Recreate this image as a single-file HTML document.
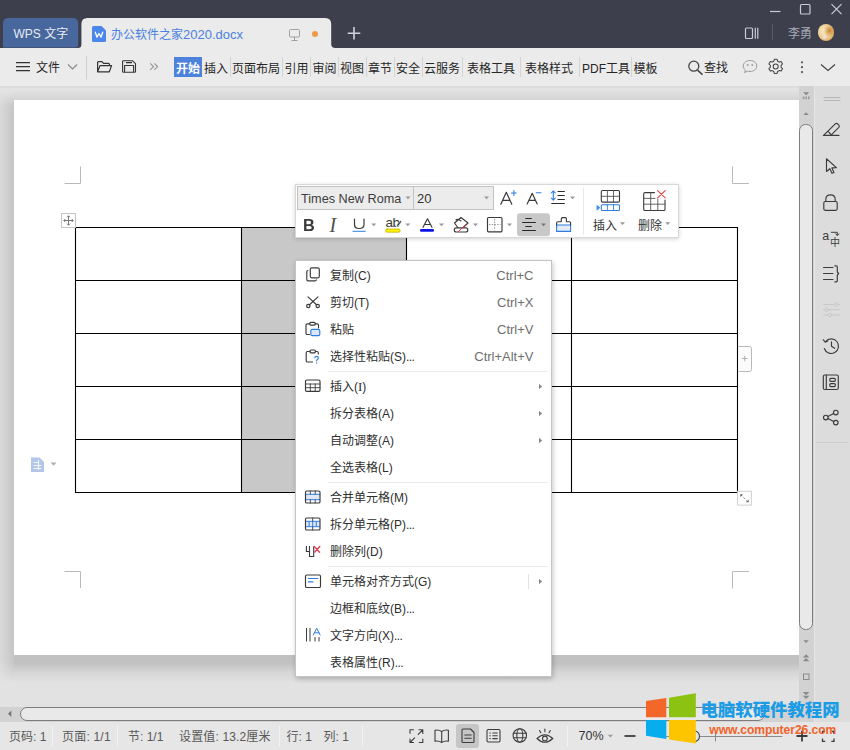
<!DOCTYPE html>
<html lang="zh-CN">
<head>
<meta charset="utf-8">
<title>WPS</title>
<style>
*{box-sizing:border-box;margin:0;padding:0}
html,body{width:850px;height:750px;overflow:hidden;background:#e1e1e1}
body{position:relative;font-family:"Liberation Sans","Noto Sans CJK SC",sans-serif;font-size:12px;color:#222}
.abs{position:absolute}
svg{position:absolute;overflow:visible}
.t{position:absolute;white-space:nowrap;line-height:1}
/* title bar */
#titlebar{left:0;top:0;width:850px;height:48px;background:#3d3f4c}
#tab1{left:3px;top:18px;width:76px;height:30px;background:#48679c;border-radius:7px 7px 0 0}
#tab2{left:81px;top:18px;width:250px;height:30px;background:#ebebeb;border-radius:7px 7px 0 0}
/* menubar */
#menubar{left:0;top:48px;width:850px;height:38px;background:#ebebeb}
.mt{position:absolute;top:62.500px;font-size:12px;line-height:13px;white-space:nowrap;color:#262626}
.ms{position:absolute;top:57px;width:1px;height:20px;background:#d4d4d4}
.st{top:730.600px;font-size:12px;color:#585858}
.cm{font-size:12px;line-height:14px;color:#2e2e2e}
.cs{font-size:13px;line-height:14px;color:#6e6e6e}
/* doc */
#docbg{left:0;top:86px;width:818px;height:620px;background:#e2e2e2}
#page{left:14px;top:100px;width:786px;height:555px;background:#fff}
</style>
</head>
<body>
<!-- TITLE BAR -->
<div class="abs" id="titlebar"></div>
<svg style="left:0;top:0" width="850" height="48" viewBox="0 0 850 48">
  <path d="M3 48V23.500Q3 18 8.500 18H72.700Q78.200 18 78.200 23.500V44.500Q78.200 47.600 75 47.600H3Z" fill="#48679c"/>
  <path d="M78 48Q81.400 48 81.400 44.500V24Q81.400 18 87.400 18H325.200Q331.200 18 331.200 24V44Q331.200 48 335.500 48Z" fill="#ebebeb"/>
</svg>
<div class="t" style="left:13.500px;top:28px;font-size:12px;color:#e6ebf5">WPS 文字</div>
<div class="t" style="left:111px;top:28px;font-size:12px;line-height:13px;color:#4a80e0">办公软件之家<span style="font-size:13px">2020.docx</span></div>


<!-- window controls -->
<svg style="left:0;top:0" width="850" height="48" viewBox="0 0 850 48" fill="none" stroke="#c9ccd6" stroke-width="1.2">
  <path d="M770 11.5h10.5"/>
  <rect x="800.5" y="4.5" width="9.5" height="9.5" rx="1"/>
  <path d="M831.5 4.2l10 10M841.5 4.2l-10 10"/>
  <rect x="745.5" y="28" width="7" height="10.5" rx="1"/>
  <path d="M755.3 27.8v11M757.8 27.8v11"/>
  <path d="M772.5 24v16" stroke="#5a5d6b" stroke-width="1"/>
  <!-- monitor icon in tab -->
  <g stroke="#a0a0a0" stroke-width="1">
    <rect x="289.500" y="29.500" width="10" height="7.5" rx="1"/>
    <path d="M294.500 37v3M291.500 40.500h6"/>
  </g>
  <!-- plus -->
  <path d="M354 27v12.500M347.700 33.200h12.600" stroke="#d0d3dc" stroke-width="1.6"/>
</svg>
<div class="abs" style="left:311.700px;top:30.500px;width:6.600px;height:6.600px;border-radius:50%;background:#f09a48"></div>
<div class="t" style="left:788px;top:28px;font-size:12px;color:#a8acb8">李勇</div>
<div class="abs" style="left:817.700px;top:24.200px;width:16.400px;height:16.400px;border-radius:50%;background:radial-gradient(circle at 40% 78%,#e8e4e8 0,rgba(232,228,232,0) 18%),radial-gradient(circle at 72% 40%,#c8862e 0,rgba(200,134,46,0) 40%),radial-gradient(circle at 42% 42%,#faeccc 0,#f0d29c 45%,#dca860 75%,#a8703a 100%)"></div>
<!-- doc icon -->
<svg style="left:92px;top:26px" width="14" height="16" viewBox="0 0 14 16">
  <path d="M1.500 0H9.500L14 4.500V14.500Q14 16 12.500 16H1.500Q0 16 0 14.500V1.500Q0 0 1.500 0Z" fill="#4b86ea"/>
  <path d="M3.300 6.200L5 11.200L7 7.500L9 11.200L10.700 6.200" fill="none" stroke="#fff" stroke-width="1.300" stroke-linejoin="round" stroke-linecap="round"/>
</svg>

<!-- MENU BAR -->
<div class="abs" id="menubar"></div>
<!-- hamburger + 文件 -->
<svg style="left:0;top:48px" width="850" height="38" viewBox="0 48 850 38" fill="none" stroke="#333" stroke-width="1.2">
  <path d="M16 62.700h14M16 66.700h14M16 70.700h14"/>
  <path d="M68 64.500l4.500 4.500l4.500-4.500" stroke="#888" stroke-width="1.100"/>
  <path d="M86.500 56v23.500" stroke="#cfcfcf" stroke-width="1"/>
  <!-- folder -->
  <path d="M97.600 71.800V62.500Q97.600 61.600 98.500 61.600H102L103.500 63.400H108.500Q109.400 63.400 109.400 64.300V65.600M97.600 71.800L100 65.600H111.600L109.300 71.800Z" stroke-linejoin="round"/>
  <!-- save -->
  <path d="M122.600 61.700Q122.600 60.800 123.500 60.800H132.600L135.500 63.700V71.400Q135.500 72.300 134.600 72.300H123.500Q122.600 72.300 122.600 71.400Z M124.600 72.300V65.500H133.600V72.300 M126 62.600H132" stroke-linejoin="round" stroke-width="1.100"/>
  <!-- >> -->
  <path d="M150.200 63.300l3.300 3.300l-3.300 3.300M154.300 63.300l3.300 3.300l-3.300 3.300" stroke="#989898" stroke-width="1.200"/>
  <!-- search -->
  <circle cx="693.800" cy="66.200" r="5" stroke="#444" stroke-width="1.300"/><path d="M697.500 70.100l5 4.500" stroke="#444" stroke-width="1.500"/>
  <!-- chat -->
  <g stroke="#9c9c9c" stroke-width="1">
   <path d="M750 60.500c3.800 0 6.800 2.500 6.800 5.500s-3 5.500-6.800 5.500c-.9 0-1.800-.1-2.600-.4l-2.700 1.500l.6-2.600c-1.300-1-2.100-2.400-2.100-4c0-3 3-5.500 6.800-5.500z"/>
   <circle cx="747.700" cy="65" r=".6" fill="#aaa"/><circle cx="752.300" cy="65" r=".6" fill="#aaa"/>
  </g>
  <!-- gear -->
  <g stroke="#444" stroke-width="1.050">
   <circle cx="775.700" cy="66.400" r="2.500"/>
   <path d="M774.300 59.300h2.800l.5 1.900l1.600.9l1.900-.5l1.400 2.400l-1.400 1.400v1.900l1.400 1.400l-1.400 2.400l-1.900-.5l-1.600.9l-.5 1.900h-2.800l-.5-1.900l-1.600-.9l-1.900.5l-1.400-2.400l1.400-1.400v-1.900l-1.400-1.400l1.400-2.400l1.900.5l1.600-.9z" stroke-linejoin="round"/>
  </g>
  <!-- dots -->
  <g fill="#555" stroke="none"><circle cx="802" cy="62.300" r="1.100"/><circle cx="802" cy="67.200" r="1.100"/><circle cx="802" cy="72.100" r="1.100"/></g>
  <path d="M821 64.500l7 6l7-6" stroke="#444" stroke-width="1.200"/>
</svg>
<div class="mt" style="left:36px;top:61.500px">文件</div>
<div class="abs" style="left:174px;top:57px;width:28px;height:20px;background:#4d82dc"></div>
<div class="mt" style="left:176px;color:#fff;font-weight:bold">开始</div>
<div class="mt" style="left:204px">插入</div>
<div class="mt" style="left:232px">页面布局</div>
<div class="mt" style="left:284.4px">引用</div>
<div class="mt" style="left:312.4px">审阅</div>
<div class="mt" style="left:340px">视图</div>
<div class="mt" style="left:368px">章节</div>
<div class="mt" style="left:396px">安全</div>
<div class="mt" style="left:424px">云服务</div>
<div class="mt" style="left:467px">表格工具</div>
<div class="mt" style="left:525px">表格样式</div>
<div class="mt" style="left:582px">PDF工具</div>
<div class="mt" style="left:633.5px">模板</div>
<div class="ms" style="left:230.4px"></div>
<div class="ms" style="left:282.4px"></div>
<div class="ms" style="left:310.4px"></div>
<div class="ms" style="left:338px"></div>
<div class="ms" style="left:366px"></div>
<div class="ms" style="left:394px"></div>
<div class="ms" style="left:422px"></div>
<div class="ms" style="left:462px"></div>
<div class="ms" style="left:520px"></div>
<div class="ms" style="left:578.5px"></div>
<div class="ms" style="left:631px"></div>
<div class="mt" style="left:704px;top:62px">查找</div>


<!-- DOC AREA -->
<div class="abs" id="docbg"></div>
<div class="abs" style="left:0;top:86px;width:800px;height:1.500px;background:#dcdcdc"></div>
<div class="abs" style="left:14px;top:87.500px;width:786px;height:12.500px;background:linear-gradient(#e4e4e4,#d5d5d5)"></div>
<div class="abs" style="left:0;top:92px;width:14px;height:590px;background:linear-gradient(90deg,#dadada,#c5c5c5);-webkit-mask-image:linear-gradient(transparent 0,#000 14px,#000 570px,transparent 590px);mask-image:linear-gradient(transparent 0,#000 14px,#000 570px,transparent 590px)"></div>
<div class="abs" style="left:14px;top:655px;width:786px;height:28px;background:linear-gradient(#c0c0c0 0,#c2c2c2 30%,#d6d6d6 62%,#e2e2e2 100%)"></div>

<div class="abs" id="page"></div>
<!-- table -->
<div class="abs" style="left:241px;top:227px;width:165px;height:265px;background:#c8c8c8"></div>
<svg style="left:0;top:86px" width="818" height="620" viewBox="0 86 818 620" fill="none" stroke="#000" stroke-width="1.100" shape-rendering="auto">
  <path d="M75.500 227.500H737.500M75.500 280.500H737.500M75.500 333.500H737.500M75.500 386.500H737.500M75.500 439.500H737.500M75.500 492.500H737.500"/>
  <path d="M75.500 227V493M241.500 227V493M406.500 227V493M571.500 227V493M737.500 227V493"/>
  <!-- crop marks -->
  <g stroke="#bababa" stroke-width="1">
    <path d="M80.500 166.500V183.500H64.500"/>
    <path d="M732.500 166.500V183.500H749"/>
    <path d="M64.500 571.500H80.500V588"/>
    <path d="M749 571.500H732.500V588.500"/>
  </g>
  <!-- move handle -->
  <rect x="61.500" y="213.500" width="14" height="14" fill="#fff" stroke="#c4c4c4" stroke-width="1"/>
  <g stroke="#777" stroke-width="1">
    <path d="M63.800 220.500H73.200M68.500 215.800V225.200"/>
    <path d="M65.300 219l-1.500 1.500l1.500 1.500M71.700 219l1.500 1.500l-1.500 1.500M67 217.300l1.500-1.500l1.500 1.500M67 223.700l1.500 1.500l1.500-1.500" />
  </g>
  <!-- plus handle -->
  <path d="M738.500 346.500H749.500Q751.500 346.500 751.500 348.500V369.500Q751.500 371.500 749.500 371.500H738.500" fill="#fbfbfb" stroke="#b9b9b9" stroke-width="1"/>
  <path d="M742 358.500H747.500M744.700 355.800V361.300" stroke="#b0b0b0" stroke-width="1"/>
  <!-- resize handle -->
  <rect x="737.600" y="491.300" width="13.800" height="13.800" fill="#fff" stroke="#d0d0d0" stroke-width="1"/>
  <path d="M740.700 494.500l7.500 7.500" stroke="#888" stroke-width=".9" stroke-dasharray="2.500 1.500"/><path d="M740.300 497V494.200H743.100Z M748.700 499.500V502.300H745.900Z" stroke="none" fill="#666"/>
  <!-- left doc icon -->
  <g stroke="none" fill="#b1c6e8">
    <path d="M31 457.500H39.500L44 462V472H31Z"/>
  </g>
  <path d="M33.500 462.500H38M33.500 465.500H41.500M33.500 468.500H41.500M38.500 460V470" stroke="#fff" stroke-width="1.200" opacity=".85"/>
  <path d="M50.500 462.500H56.500L53.500 465.800Z" fill="#b0b0b0" stroke="none"/>
</svg>



<!-- VERTICAL SCROLLBAR -->
<div class="abs" style="left:799px;top:86px;width:14.500px;height:620px;background:#d2d2d2"></div>
<div class="abs" style="left:799px;top:124px;width:13.500px;height:506px;border:1px solid #7d7d7d;border-radius:6.500px;background:#e9e9e9"></div>
<svg style="left:799px;top:86px" width="15" height="620" viewBox="799 86 15 620" fill="#8a8a8a" stroke="none">
  <path d="M803.200 92.300H809.200L806.200 95.300Z"/>
  <path d="M802.800 96.500h1.600v2.800h-1.600zM805.400 96.500h1.600v2.800h-1.600zM808 96.500h1.600v2.800h-1.600z" fill="#999"/>
  <path d="M803.400 115H808.800L806.100 112.200Z"/>
  <path d="M803.400 640.200H808.800L806.100 643Z"/>
  <path d="M802.800 657.500H809.400L806.100 654.300ZM802.800 661.300H809.400L806.100 658.100Z"/>
  <rect x="803.500" y="674" width="5.500" height="5.500" fill="none" stroke="#8a8a8a" stroke-width="1"/>
  <path d="M802.800 692H809.400L806.100 695.200ZM802.800 695.800H809.400L806.100 699Z"/>
</svg>

<!-- RIGHT SIDEBAR -->
<div class="abs" style="left:813.500px;top:86px;width:36.500px;height:635.500px;background:#dcdcdc;border-left:1px solid #e6e6e6"></div>
<svg style="left:813px;top:86px" width="37" height="400" viewBox="813 86 37 400" fill="none" stroke="#3c3c3c" stroke-width="1.150" stroke-linejoin="round" stroke-linecap="round">
  <path d="M824 97.500H840M824 100.500H840" stroke="#b6b6b6" stroke-width="1"/>
  <!-- highlighter -->
  <path d="M823.400 135.400H839M823.800 135.200L835.300 123.800Q836.500 122.800 837.600 123.800L838.900 125.200Q839.800 126.300 838.800 127.400L830.800 135.300M827.800 131.200L831.300 134.800"/>
  <!-- cursor -->
  <path d="M826.500 158.800V171.500L829.800 168.700L832 173.300L834 172.400L831.900 167.900L836.400 167.600Z"/>
  <!-- lock -->
  <path d="M825.800 201.500V199.500Q825.800 194.800 830.500 194.800Q835.200 194.800 835.200 199.500V201.500"/>
  <rect x="823.800" y="201.500" width="13.400" height="8.800" rx="1.500"/>
  <!-- translate -->
  <path d="M831.300 232.300H837.300V235.300M835.700 233.800L837.300 235.500L838.900 233.800" stroke-width="1"/>
  <text x="822.300" y="240.300" font-family="'Liberation Sans',sans-serif" font-size="12.500" fill="#3c3c3c" stroke="none">a</text>
  <text x="830" y="246" font-family="'Noto Sans CJK SC',sans-serif" font-size="10" fill="#3c3c3c" stroke="none">中</text>
  <!-- paragraph -->
  <path d="M823.500 267.500H833M823.500 273.500H833M823.500 279.500H833"/>
  <path d="M834.800 265.800H836.300Q837.300 265.800 837.300 266.800V272L838.600 273.500L837.300 275V280.800Q837.300 281.800 836.300 281.800H834.800"/>
  <!-- sliders (disabled) -->
  <g stroke="#c8c8c8" stroke-width="1">
    <path d="M823.600 304.500H839.600M823.600 309.700H839.600M823.600 315H839.600"/>
    <circle cx="836.500" cy="304.500" r="1.700" fill="#dcdcdc"/><circle cx="826.500" cy="309.700" r="1.700" fill="#dcdcdc"/><circle cx="830" cy="315" r="1.700" fill="#dcdcdc"/>
  </g>
  <!-- history -->
  <path d="M825.600 341.500A7.300 7.300 0 1 1 824.300 348.500"/>
  <path d="M823.300 339.800L825.300 342.200L828 340.800" />
  <path d="M831.500 341.800V346.300L834.700 348.300"/>
  <!-- doc library -->
  <rect x="823.300" y="375" width="15" height="14.500" rx="1.500"/>
  <path d="M826.300 375V389.500"/>
  <rect x="829.800" y="378.300" width="5.500" height="3" rx="1"/>
  <rect x="829.800" y="383.600" width="5.500" height="3" rx="1"/>
  <!-- share -->
  <circle cx="835.800" cy="412.500" r="2.300"/><circle cx="825.800" cy="417.500" r="2.300"/><circle cx="835.800" cy="422.600" r="2.300"/>
  <path d="M827.900 416.500L833.700 413.500M827.900 418.500L833.700 421.500"/>
  <path d="M816.500 442.500H847" stroke="#cdcdcd" stroke-width="1"/>
</svg>

<!-- HORIZONTAL SCROLLBAR -->
<div class="abs" style="left:0;top:706.500px;width:813.500px;height:15px;background:#d2d2d2"></div>
<div class="abs" style="left:20px;top:707px;width:745px;height:14px;border:1px solid #7d7d7d;border-radius:7px;background:#e9e9e9"></div>
<svg style="left:0;top:706px" width="20" height="16" viewBox="0 706 20 16"><path d="M11.300 710.500V717.100L8 713.800Z" fill="#777"/></svg>

<!-- STATUS BAR -->
<div class="abs" style="left:0;top:721.500px;width:850px;height:28.500px;background:#e6e6e6"></div>
<div class="t st" style="left:9px">页码: 1</div>
<div class="t st" style="left:62px;letter-spacing:.2px">页面: 1/1</div>
<div class="t st" style="left:128px">节: 1/1</div>
<div class="t st" style="left:179px;letter-spacing:.15px">设置值: 13.2厘米</div>
<div class="t st" style="left:286.5px">行: 1</div>
<div class="t st" style="left:323.5px">列: 1</div>
<div class="abs" style="left:52px;top:726px;width:1px;height:20px;background:#f2f2f2"></div>
<div class="abs" style="left:117px;top:726px;width:1px;height:20px;background:#f2f2f2"></div>
<div class="abs" style="left:278.5px;top:726px;width:1px;height:20px;background:#f2f2f2"></div>
<div class="abs" style="left:361.5px;top:726px;width:1px;height:20px;background:#f2f2f2"></div>
<div class="abs" style="left:566.5px;top:726px;width:1px;height:20px;background:#f2f2f2"></div>

<div class="abs" style="left:456px;top:724px;width:23px;height:24px;background:#c6c6c6;border-radius:3px"></div>
<svg style="left:400px;top:722px" width="414" height="28" viewBox="400 722 414 28" fill="none" stroke="#3c3c3c" stroke-width="1.100" stroke-linejoin="round" stroke-linecap="round">
  <!-- fullscreen -->
  <path d="M413.500 729.800H410V733.300M419 729.800H422.800V733.500M422.800 729.800L418.200 734.400M410 739V742.500H413.500M410 742.500L414.600 737.900M419.300 742.500H422.800V739"/>
  <!-- book -->
  <path d="M441.700 731.500Q438.500 729.500 435 730.300V741.300Q438.500 740.500 441.700 742.500Q444.900 740.500 448.400 741.300V730.300Q444.900 729.500 441.700 731.500ZM441.700 731.500V742.500"/>
  <!-- page -->
  <path d="M462 730Q462 729 463 729H470.500L474 732.500V741.500Q474 742.500 473 742.500H463Q462 742.500 462 741.500Z"/>
  <path d="M464.800 735H471.200M464.800 738.300H471.200"/>
  <!-- outline -->
  <rect x="487" y="729.500" width="13" height="12.500" rx="1.200"/>
  <path d="M492.800 733H497.300M492.800 735.800H497.300M492.800 738.600H497.300M489.800 733H490.300M489.800 735.800H490.300M489.800 738.600H490.300"/>
  <!-- globe -->
  <circle cx="519.800" cy="735.500" r="6.700"/>
  <ellipse cx="519.800" cy="735.500" rx="3" ry="6.700"/>
  <path d="M513.300 733.300H526.300M513.300 737.800H526.300"/>
  <!-- eye -->
  <path d="M537 738.500Q544.800 731 552.800 738.500Q544.800 746 537 738.500Z"/>
  <circle cx="544.900" cy="738.500" r="2.400"/>
  <path d="M544.900 729V731.800M539.500 730.500L540.800 732.800M550.300 730.500L549 732.800"/>
  <!-- zoom arrow -->
  <path d="M607.800 734.800H613L610.400 737.600Z" fill="#999" stroke="none"/>
  <!-- minus -->
  <path d="M624.500 736H635.500" stroke-width="1.800" stroke-linecap="butt"/>
  <!-- slider -->
  <path d="M660 736.500H782" stroke="#8a8a8a" stroke-width="1"/>
  <path d="M715.500 732V741" stroke="#8a8a8a" stroke-width="1"/>
  <circle cx="694" cy="736.300" r="5.500" fill="#e6e6e6"/>
  <!-- plus -->
  <path d="M796.500 736H807.500M802 730.800V741.500" stroke-width="1.800" stroke-linecap="butt"/>
</svg>
<svg style="left:813px;top:722px" width="37" height="28" viewBox="813 722 37 28" fill="none" stroke="#3c3c3c" stroke-width="1.100">
  <path d="M822.500 734V731.500H825M831.500 731.500H834V734M834 738.500V741.300H831.300M825.200 741.300H822.500V738.500" stroke-width="1.300"/>
</svg>
<div class="t" style="left:578.500px;top:729.800px;font-size:12.500px;color:#333">70%</div>

<!-- WATERMARK -->
<svg style="left:640px;top:690px" width="210" height="60" viewBox="640 690 210 60">
  <path d="M646 701L666.300 698V717.200H646Z" fill="#f4672a"/>
  <path d="M669 697.700L695.800 693.200V717.200H669Z" fill="#8cc211"/>
  <path d="M646 720H666.300V739L646 735.800Z" fill="#08adee"/>
  <path d="M669 720H695.800V743.600L669 739.400Z" fill="#fdc400"/>
  <text x="700.500" y="716" font-family="'Liberation Sans','Noto Sans CJK SC',sans-serif" font-weight="900" font-size="17.400" fill="#1d9ce6">电脑软硬件教程网</text>
  <text x="709.300" y="734" font-family="'Liberation Sans',sans-serif" font-weight="bold" font-size="12.100" fill="#f2622a" textLength="127" lengthAdjust="spacing">www.computer26.com</text>
</svg>


<!-- FLOATING TOOLBAR -->
<div class="abs" style="left:295px;top:184px;width:384px;height:54px;background:#fff;border:1px solid #d8d8d8;box-shadow:0 1px 4px rgba(0,0,0,.18)"></div>
<div class="abs" style="left:297px;top:186px;width:117px;height:24px;background:#ececec;border:1px solid #c2c2c2"></div>
<div class="abs" style="left:413px;top:186px;width:81px;height:24px;background:#ececec;border:1px solid #c2c2c2"></div>
<div class="t" style="left:301px;top:192.500px;font-size:12.700px;color:#3c3c3c">Times New Roma</div>
<div class="t" style="left:417px;top:191.500px;font-size:13px;color:#333">20</div>
<svg style="left:295px;top:184px" width="384" height="54" viewBox="295 184 384 54" fill="none" stroke="#3a3a3a" stroke-width="1.150" stroke-linejoin="round" stroke-linecap="round">
  <g fill="#999" stroke="none">
    <path d="M405.500 196.500H410.500L408 199.300Z"/>
    <path d="M484 196.500H489L486.500 199.300Z"/>
    <path d="M570 196.500H575L572.500 199.300Z"/>
    <path d="M371.300 223.500H376.300L373.800 226.300Z"/>
    <path d="M405.300 223.500H410.300L407.800 226.300Z"/>
    <path d="M439 223.500H444L441.500 226.300Z"/>
    <path d="M473 223.500H478L475.500 226.300Z"/>
    <path d="M507 223.500H512L509.500 226.300Z"/>
    <path d="M620 222.300H625L622.500 225.100Z"/>
    <path d="M665.200 222.300H670.200L667.700 225.100Z"/>
  </g>
  <!-- align highlighted -->
  <rect x="517" y="213.300" width="33" height="23" rx="3" fill="#c8c8c8" stroke="none"/>
  <path d="M541 223.500H546L543.500 226.300Z" fill="#777" stroke="none"/>
  <path d="M525.300 218.500H531.800M522.100 222.500H535.900M525.300 226.500H531.800M522.100 230.500H535.900" stroke-linecap="butt" stroke-width="1.100" stroke="#2a2a2a"/>
  <!-- U underline -->
  <path d="M354.500 219V224.500Q354.500 228.500 359.200 228.500Q364 228.500 364 224.500V219" stroke-width="1.200"/>
  <path d="M353 231.300H365.300" stroke="#2f7de0" stroke-width="1"/>
  <!-- ab highlight -->
  <rect x="385.600" y="229" width="14.600" height="3.200" rx="1.500" fill="#fff200" stroke="#b8a800" stroke-width=".7"/>
  <!-- font color A -->
  <path d="M423 227.300L427.500 218.800L432 227.300M424.600 224.500H430.400" stroke-width="1.150"/>
  <rect x="420" y="229" width="14" height="2.800" rx="1.200" fill="#0a14e6" stroke="none"/>
  <!-- shading (bucket) -->
  <path d="M454.500 223L461 217.500L468 223L462 228.500Q460 229.500 458.500 228.500Z M456 219.800Q458 218.600 461 221"/>
  <rect x="454.300" y="227.800" width="13.500" height="4.200" rx="2" fill="#fff"/>
  <path d="M458 231.800L466 224.500" stroke="#e0404a" stroke-width="1"/>
  <!-- borders -->
  <rect x="487.500" y="217.500" width="14.500" height="14.300" rx="1"/>
  <path d="M494.700 219V230.300M489 224.600H500.500" stroke="#777" stroke-width=".8" stroke-dasharray="1.500 1.200" stroke-linecap="butt"/>
  <!-- format painter -->
  <rect x="556.600" y="225" width="14" height="6.400" fill="#e4ecfa" stroke="#2f7de0" stroke-width="1.100"/>
  <path d="M556.600 225V223Q556.600 221.800 557.800 221.800H561.300V218.800Q561.300 217.600 562.500 217.600H565.200Q566.400 217.600 566.400 218.800V221.800H569.400Q570.600 221.800 570.600 223V225" stroke-width="1.100"/>
  <!-- A+ -->
  <path d="M500.800 204.300L506.300 192.300L511.800 204.300M502.800 200.300H509.800" stroke-width="1.200"/>
  <path d="M511.500 193H516.300M513.900 190.600V195.400" stroke="#2f7de0" stroke-width="1.100"/>
  <!-- A- -->
  <path d="M527.200 204L532.200 193.300L537.200 204M529 200.400H535.400" stroke-width="1.200"/>
  <path d="M536.300 192.700H541" stroke="#2f7de0" stroke-width="1.100"/>
  <!-- line spacing -->
  <path d="M553.300 191V200M551.300 193L553.300 190.800L555.300 193M551.300 198L553.300 200.200L555.300 198" stroke="#2f7de0" stroke-width="1.100"/>
  <path d="M557.500 191.500H564.800M557.500 195.500H564.800M557.500 199.500H564.800M551.300 203.500H564.800" stroke-linecap="butt" stroke-width="1.100" stroke="#2a2a2a"/>
  <!-- vsep -->
  <path d="M583.500 188V234.500" stroke="#e8e8e8" stroke-width="1"/>
  <!-- insert -->
  <rect x="601.300" y="190.500" width="18.200" height="11.600" rx="1.300" stroke-width="1.100"/>
  <path d="M601.300 196.300H619.500M607.400 190.500V202.100M613.500 190.500V202.100" stroke="#555" stroke-width=".9"/>
  <g stroke="#2f7de0" stroke-width="1.100">
    <rect x="601.300" y="204.800" width="18.200" height="5.700" rx="1"/>
    <path d="M607.400 204.800V210.500M613.500 204.800V210.500" stroke-width=".9"/>
    <path d="M597.200 205.500L599.800 207.700L597.200 209.900Z" fill="#2f7de0" stroke-width=".6"/>
  </g>
  <!-- delete -->
  <path d="M654.500 192.600H645Q643.700 192.600 643.700 193.900V209.200Q643.700 210.500 645 210.500H663.700Q665 210.500 665 209.200V200" stroke-width="1.100"/>
  <path d="M650.700 192.600V210.500M657.800 199V210.500M643.700 198.400H655M643.700 204.200H665" stroke="#555" stroke-width=".9"/>
  <path d="M657.600 190.600L665.200 197.800M665.200 190.600L657.600 197.800" stroke="#e0404a" stroke-width="1.100"/>
</svg>
<div class="t" style="left:303.300px;top:218px;font-size:16px;font-weight:bold;color:#3a3a3a;font-family:'Liberation Sans',sans-serif;transform:scaleX(1.02);transform-origin:0 0">B</div>
<div class="t" style="left:329.500px;top:215.200px;font-size:20px;font-style:italic;color:#505050;font-family:'Liberation Serif',serif">I</div>
<div class="t" style="left:385.500px;top:216.400px;font-size:13.500px;color:#3a3a3a;letter-spacing:-.6px">ab</div>
<svg style="left:394px;top:218px" width="10" height="10" viewBox="394 218 10 10"><path d="M396.400 227L397 224.600L400.400 220.600L401.700 221.700L398.400 225.800Z" fill="#3a3a3a" stroke="#fff" stroke-width=".6"/></svg>
<div class="t" style="left:593px;top:219.500px;font-size:12px;color:#333">插入</div>
<div class="t" style="left:638px;top:219.500px;font-size:12px;color:#333">删除</div>


<!-- CONTEXT MENU -->
<div class="abs" style="left:295px;top:260px;width:257px;height:417px;background:#fff;border:1px solid #c4c4c4;box-shadow:1px 2px 5px rgba(0,0,0,.22)"></div>
<div class="abs" style="left:328px;top:371.0px;width:220px;height:1px;background:#ebebeb"></div>
<div class="abs" style="left:328px;top:481.5px;width:220px;height:1px;background:#ebebeb"></div>
<div class="abs" style="left:328px;top:565.5px;width:220px;height:1px;background:#ebebeb"></div>
<div class="t cm" style="left:330px;top:269.0px">复制(C)</div>
<div class="t cs" style="right:316.5px;top:269.0px">Ctrl+C</div>
<div class="t cm" style="left:330px;top:296.0px">剪切(T)</div>
<div class="t cs" style="right:316.5px;top:296.0px">Ctrl+X</div>
<div class="t cm" style="left:330px;top:323.0px">粘贴</div>
<div class="t cs" style="right:316.5px;top:323.0px">Ctrl+V</div>
<div class="t cm" style="left:330px;top:350.0px">选择性粘贴(S)<span style="letter-spacing:-.6px">...</span></div>
<div class="t cs" style="right:316.5px;top:350.0px">Ctrl+Alt+V</div>
<div class="t cm" style="left:330px;top:380.0px">插入(<span style="font-family:'Liberation Serif',serif;font-size:13px">I</span>)</div>
<div class="t cm" style="left:330px;top:407.0px">拆分表格(A)</div>
<div class="t cm" style="left:330px;top:434.0px">自动调整(A)</div>
<div class="t cm" style="left:330px;top:461.0px">全选表格(L)</div>
<div class="t cm" style="left:330px;top:491.0px">合并单元格(M)</div>
<div class="t cm" style="left:330px;top:518.0px">拆分单元格(P)<span style="letter-spacing:-.6px">...</span></div>
<div class="t cm" style="left:330px;top:545.0px">删除列(D)</div>
<div class="t cm" style="left:330px;top:575.0px">单元格对齐方式(G)</div>
<div class="t cm" style="left:330px;top:602.0px">边框和底纹(B)<span style="letter-spacing:-.6px">...</span></div>
<div class="t cm" style="left:330px;top:629.0px">文字方向(X)<span style="letter-spacing:-.6px">...</span></div>
<div class="t cm" style="left:330px;top:656.0px">表格属性(R)<span style="letter-spacing:-.6px">...</span></div>

<svg style="left:296px;top:261px" width="256" height="416" viewBox="296 261 256 416" fill="none" stroke="#3a3a3a" stroke-width="1.150" stroke-linejoin="round" stroke-linecap="round">
  <g fill="#8a8a8a" stroke="none"><path d="M539 383.7V389.3L542.200 386.5Z"/><path d="M539 410.7V416.3L542.200 413.5Z"/><path d="M539 437.7V443.3L542.200 440.5Z"/><path d="M539 578.7V584.3L542.200 581.5Z"/></g>
  <path d="M528.500 574.500V588.500" stroke="#e2e2e2" stroke-width="1"/>
  <!-- copy -->
  <rect x="310.300" y="267.800" width="9" height="10" rx="1.500"/>
  <path d="M308 270.500Q306.800 270.500 306.800 271.800V279.500Q306.800 280.800 308 280.800H315Q316.300 280.800 316.300 279.700"/>
  <!-- scissors -->
  <path d="M308 296.800L316.800 305M318 296.800L309.200 305"/>
  <circle cx="308.300" cy="306" r="1.700"/><circle cx="317.700" cy="306" r="1.700"/>
  <!-- paste -->
  <path d="M309.800 323.800H307.300Q306 323.800 306 325.100V333.200Q306 334.500 307.300 334.500H309.500M315.200 323.800H317.200Q318.500 323.800 318.500 325.100V328"/>
  <rect x="309.800" y="322.300" width="5.400" height="2.800" rx="1"/>
  <rect x="310.800" y="329.300" width="9" height="6.400" rx="1.500" stroke="#2f7de0" fill="#dce8fa"/>
  <!-- paste special -->
  <path d="M310 351.500H307.500Q306.200 351.500 306.200 352.800V360.700Q306.200 362 307.500 362H312.500M315.400 351.500H317Q318.300 351.500 318.300 352.800V354"/>
  <rect x="310" y="350" width="5.400" height="2.800" rx="1"/>
  <path d="M314.800 358Q314.800 356.300 316.600 356.300Q318.400 356.300 318.400 358Q318.400 359 317.300 359.500Q316.600 359.900 316.600 361M316.600 362.800V363.100" stroke="#2f7de0"/>
  <!-- table insert -->
  <rect x="305.500" y="380" width="14.500" height="11.300" rx="1.300"/>
  <path d="M305.500 384H320M305.500 387.700H320M310.300 384V391.300M315.200 384V391.300" stroke-width=".9"/>
  <!-- merge cells -->
  <rect x="305.500" y="494.300" width="14.500" height="5.400" fill="#e1e7f2" stroke="none"/>
  <path d="M305.500 494.300H320M305.500 499.700H320" stroke="#2f7de0" stroke-width="1" stroke-linecap="butt"/>
  <path d="M310.300 491V494M315.200 491V494M310.300 500V503M315.200 500V503" stroke-width=".9"/>
  <rect x="305.500" y="491" width="14.500" height="12" rx="1.300"/>
  <!-- split cells -->
  <rect x="305.500" y="521.300" width="14.500" height="5.400" fill="#e1e7f2" stroke="none"/>
  <path d="M305.500 521.300H320M305.500 526.700H320M309.100 521.300V526.700M312.700 521.300V526.700M316.300 521.300V526.700" stroke="#2f7de0" stroke-width="1" stroke-linecap="butt"/>
  <path d="M312.700 518V521M312.700 527V530" stroke-width=".9"/>
  <rect x="305.500" y="518" width="14.500" height="12" rx="1.300"/>
  <!-- delete column -->
  <path d="M306.400 546V551.500H309.500M309.500 546V556.500H313.700V546.500" stroke-width="1.100" stroke-linecap="butt" stroke-linejoin="miter"/>
  <path d="M314.300 546.500L319.600 552.300M319.800 546.500L314.800 552" stroke="#e23c4c" stroke-width="1.300"/>
  <!-- cell align -->
  <rect x="305.500" y="575" width="15" height="12.500" rx="1.300"/>
  <path d="M308.500 578.500H317.800M308.500 581.800H313" stroke="#2f7de0"/>
  <!-- text direction -->
  <path d="M306.500 628V641.500M310 628V641.500M315 637V641.500M319 637V641.500" stroke-width="1" stroke-linecap="butt"/>
  <path d="M313.300 635L316.700 628.300L320.100 635M314.500 632.800H318.900" stroke="#2f7de0" stroke-width="1"/>
</svg>

</body>
</html>
